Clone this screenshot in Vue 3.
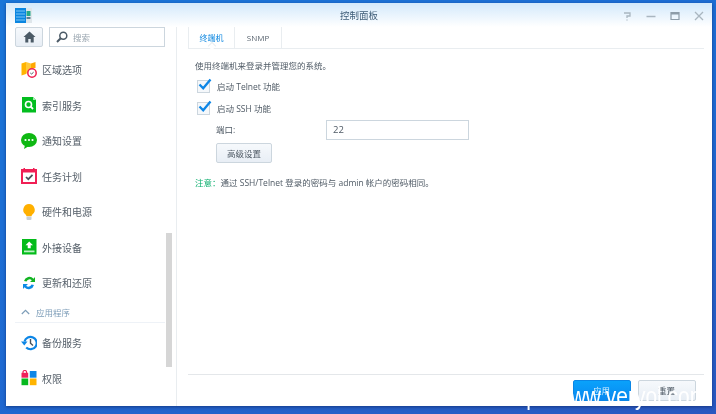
<script setup>
const topItems = [
  { key: 'region', label: '区域选项' },
  { key: 'index', label: '索引服务' },
  { key: 'notify', label: '通知设置' },
  { key: 'task', label: '任务计划' },
  { key: 'power', label: '硬件和电源' },
  { key: 'external', label: '外接设备' },
  { key: 'update', label: '更新和还原' }
]
const appItems = [
  { key: 'backup', label: '备份服务' },
  { key: 'perm', label: '权限' }
]
</script>

<template>
  <div class="desktop">
    <div class="window">
      <header class="titlebar">
        <svg class="logo" width="17" height="15" viewBox="0 0 17 15">
          <rect width="11" height="15" fill="#0b86e0" />
          <rect x="11" width="6" height="15" fill="#dfe6ea" />
          <path d="M1 3h9M1 6h9M1 9h9M1 12h9" stroke="#7cc4f5" stroke-width="1" />
          <rect x="11.5" y="3" width="4" height="5" fill="#25a88a" />
          <rect x="11.5" y="9" width="4" height="2" fill="#5d7f95" />
        </svg>
        <span class="title">控制面板</span>
        <div class="controls">
          <svg width="10" height="10" viewBox="0 0 10 10"><path d="M2 2h6v3H5v2M5 8.5v1" fill="none" stroke="#a9b6c0" stroke-width="1.3" /></svg>
          <svg width="10" height="10" viewBox="0 0 10 10"><path d="M0.500 5.500h9" stroke="#a9b6c0" stroke-width="1.500" /></svg>
          <svg width="10" height="10" viewBox="0 0 10 10"><path d="M1 1.500h8v7H1z" fill="none" stroke="#8d9ca8" stroke-width="1.200" /><path d="M1 2.500h8" stroke="#8d9ca8" stroke-width="2" /></svg>
          <svg width="10" height="10" viewBox="0 0 10 10"><path d="M1 1l8 8M9 1l-8 8" stroke="#a9b6c0" stroke-width="1.300" /></svg>
        </div>
      </header>

      <div class="body">
        <aside class="sidebar">
          <div class="toolbar">
            <button class="home">
              <svg width="13" height="12" viewBox="0 0 13 12">
                <path d="M6.500 0.500L0.500 6h1.800v5.500h3V8h2.400v3.500h3V6h1.800z" fill="#4b5a66" />
              </svg>
            </button>
            <div class="search">
              <svg width="12" height="12" viewBox="0 0 12 12">
                <circle cx="7.300" cy="4.700" r="3.500" fill="none" stroke="#4b5a66" stroke-width="1.500" />
                <path d="M4.700 7.300L1 11" stroke="#4b5a66" stroke-width="2" />
              </svg>
              <span>搜索</span>
            </div>
          </div>

          <nav class="nav">
            <div v-for="item in topItems" :key="item.key" class="nav-item">
              <svg class="nav-icon" width="16" height="16" viewBox="0 0 16 16">
                <template v-if="item.key === 'region'">
                  <path d="M0.500 1.500L5 0v12L0.500 13.500z" fill="#ffb400" />
                  <path d="M5 0l5 1.500V8l-5 4z" fill="#ffc93c" />
                  <path d="M10 1.500L14.500 0v6h-4.500z" fill="#ffa800" />
                  <circle cx="11" cy="11" r="4.200" fill="#fff" stroke="#ee2150" stroke-width="1.500" />
                  <path d="M9.300 11l1.300 1 2-1.800" fill="none" stroke="#4b5a66" stroke-width="1" />
                </template>
                <template v-else-if="item.key === 'index'">
                  <path d="M1 0h11l3 3v12.500H1z" fill="#03bd1f" />
                  <path d="M12 0v3h3z" fill="#a6eab0" />
                  <circle cx="7.500" cy="7.500" r="3" fill="none" stroke="#fff" stroke-width="1.600" />
                  <path d="M9.700 9.700l2.300 2.300" stroke="#fff" stroke-width="1.800" />
                </template>
                <template v-else-if="item.key === 'notify'">
                  <ellipse cx="8" cy="7" rx="8" ry="7" fill="#0fb813" />
                  <path d="M4 12l-1 4 5-3z" fill="#0fb813" />
                  <circle cx="4.500" cy="7" r="1.100" fill="#fff" />
                  <circle cx="8" cy="7" r="1.100" fill="#fff" />
                  <circle cx="11.500" cy="7" r="1.100" fill="#fff" />
                </template>
                <template v-else-if="item.key === 'task'">
                  <rect x="0" y="1" width="16" height="15" fill="#f01f55" />
                  <rect x="2" y="4.500" width="12" height="9.500" fill="#fff" />
                  <rect x="2.500" y="0" width="1.500" height="3" fill="#f01f55" />
                  <rect x="12" y="0" width="1.500" height="3" fill="#f01f55" />
                  <path d="M5 9l2.300 2.200L11.500 6.800" fill="none" stroke="#47525c" stroke-width="1.700" />
                </template>
                <template v-else-if="item.key === 'power'">
                  <path d="M8 0a5.800 5.800 0 0 0-3.600 10.300c.7.600 1 1.200 1 2h5.200c0-.8.300-1.400 1-2A5.800 5.800 0 0 0 8 0z" fill="#ffb000" />
                  <rect x="5.500" y="12.500" width="5" height="3.500" rx="1" fill="#c8d0d6" />
                </template>
                <template v-else-if="item.key === 'external'">
                  <rect x="1" y="0" width="14.500" height="15.500" fill="#04bb1a" />
                  <path d="M8.200 2.500L4.500 6.300h2.200v3h3v-3H12z" fill="#fff" />
                  <rect x="3" y="11.500" width="10.500" height="1.800" fill="#bdf0c4" />
                </template>
                <template v-else>
                  <path d="M3 6a5.500 5.500 0 0 1 9.500-2.300L14 2v5H9l1.800-1.800A3.300 3.300 0 0 0 5.500 6.500z" fill="#13b423" />
                  <path d="M13 10a5.500 5.500 0 0 1-9.500 2.300L2 14V9h5L5.200 10.800a3.300 3.300 0 0 0 5.300-1.300z" fill="#0c8ae6" />
                </template>
              </svg>
              <span>{{ item.label }}</span>
            </div>

            <div class="group">
              <svg width="9" height="6" viewBox="0 0 9 6"><path d="M0.800 5L4.500 1.300 8.200 5" fill="none" stroke="#7d9db8" stroke-width="1.200" /></svg>
              <span>应用程序</span>
            </div>

            <div v-for="item in appItems" :key="item.key" class="nav-item">
              <svg class="nav-icon" width="16" height="16" viewBox="0 0 16 16">
                <template v-if="item.key === 'backup'">
                  <path d="M3.500 6.500a6.200 6.200 0 1 1 1.700 6" fill="none" stroke="#0d86e6" stroke-width="2.200" />
                  <path d="M0 6.500h6.500L3.300 10.500z" fill="#0d86e6" />
                  <path d="M9.500 4v4.300l2.500 2.200" fill="none" stroke="#47525c" stroke-width="1.400" />
                </template>
                <template v-else>
                  <rect x="8.800" y="1" width="6.700" height="6.700" fill="#0d86e6" />
                  <rect x="0.500" y="8.500" width="6.700" height="6.700" fill="#06b91e" />
                  <rect x="8.800" y="8.500" width="6.700" height="6.700" fill="#ffb400" />
                  <rect x="0.500" y="2.800" width="6.700" height="4.900" fill="#f0205a" />
                  <path d="M2 3V2.300a1.800 1.800 0 0 1 3.600 0V3" fill="none" stroke="#f0205a" stroke-width="1.200" />
                </template>
              </svg>
              <span>{{ item.label }}</span>
            </div>
          </nav>
          <div class="scrollbar"></div>
        </aside>

        <main class="main">
          <div class="tabs">
            <div class="tab active">终端机</div>
            <div class="tab">SNMP</div>
          </div>

          <div class="content">
            <p class="desc">使用终端机来登录并管理您的系统。</p>
            <label class="check">
              <span class="box">
                <svg width="15" height="13" viewBox="0 0 15 13"><path d="M2.500 6.500l3.700 3.800L13.500 1.500" fill="none" stroke="#0d86e6" stroke-width="2.300" /></svg>
              </span>
              启动 Telnet 功能
            </label>
            <label class="check">
              <span class="box">
                <svg width="15" height="13" viewBox="0 0 15 13"><path d="M2.500 6.500l3.700 3.800L13.500 1.500" fill="none" stroke="#0d86e6" stroke-width="2.300" /></svg>
              </span>
              启动 SSH 功能
            </label>
            <div class="port-row">
              <span class="port-label">端口:</span>
              <div class="input">22</div>
            </div>
            <button class="btn advanced">高级设置</button>
            <p class="note"><span class="note-tag">注意：</span>通过 SSH/Telnet 登录的密码与 admin 帐户的密码相同。</p>
          </div>

          <footer class="footer">
            <button class="btn primary">应用</button>
            <button class="btn reset">重置</button>
          </footer>
        </main>
      </div>
    </div>
    <div class="watermark">http://www.veryol.com</div>
  </div>
</template>

<style>
html, body { margin: 0; padding: 0; }
</style>

<style scoped>
.desktop {
  position: relative;
  box-sizing: border-box;
  width: 716px;
  height: 414px;
  overflow: hidden;
  padding: 3px 4px 8px 6px;
  background: linear-gradient(160deg, #1a76d8 0%, #1f6ad2 55%, #2a58c0 100%);
  font-family: "Open Sans", "Noto Sans CJK SC", sans-serif;
  color: #4f5a65;
  filter: blur(0.35px);
}
.window {
  display: flex;
  flex-direction: column;
  height: 403px;
  background: #fff;
  box-shadow: 0 1px 3px rgba(10, 30, 90, 0.6);
}
.titlebar {
  position: relative;
  flex: none;
  display: flex;
  align-items: center;
  justify-content: center;
  height: 24px;
  background: linear-gradient(#d3e9fb, #ffffff);
}
.logo { position: absolute; left: 9px; top: 5px; }
.title { font-size: 9.500px; color: #3f5d78; }
.controls {
  position: absolute;
  right: 8px;
  top: 8px;
  display: flex;
  gap: 14px;
}
.body { flex: 1; display: flex; min-height: 0; }
.sidebar {
  position: relative;
  flex: none;
  box-sizing: border-box;
  width: 171px;
  padding: 0 0 0 9px;
  border-right: 1.500px solid #e9edf0;
}
.toolbar { display: flex; gap: 6px; height: 20px; }
.home {
  box-sizing: border-box;
  width: 28px;
  height: 20px;
  padding: 0;
  display: flex;
  align-items: center;
  justify-content: center;
  border: 1px solid #ccd6de;
  border-radius: 2px;
  background: linear-gradient(#f6f9fc, #e8eef5);
}
.search {
  box-sizing: border-box;
  width: 116px;
  height: 20px;
  display: flex;
  align-items: center;
  gap: 5px;
  padding-left: 6px;
  border: 1px solid #ccd6de;
  font-size: 8.500px;
  color: #9aa6b0;
}
.nav { margin: 5px 0 0 -3px; }
.nav-item {
  display: flex;
  align-items: center;
  gap: 5px;
  height: 35.500px;
  padding-left: 9px;
  font-size: 10px;
  color: #56606a;
}
.nav-icon { flex: none; }
.group {
  display: flex;
  align-items: center;
  gap: 6px;
  box-sizing: border-box;
  width: 150px;
  height: 22px;
  margin: 0 0 2.500px 3px;
  padding: 2px 0 0 6px;
  border-bottom: 1px solid #eef2f7;
  font-size: 8.500px;
  color: #7d9db8;
}
.scrollbar {
  position: absolute;
  left: 160px;
  top: 206px;
  width: 6px;
  height: 134px;
  background: #d6d6d6;
}
.main {
  flex: 1;
  display: flex;
  flex-direction: column;
  min-width: 0;
  padding: 0 8.500px 0 11px;
}
.tabs {
  flex: none;
  display: flex;
  height: 21px;
  border-bottom: 1px solid #e9edf0;
}
.tab {
  position: relative;
  width: 47px;
  display: flex;
  align-items: center;
  justify-content: center;
  box-sizing: border-box;
  border-right: 1px solid #e9edf0;
  font-size: 8px;
  color: #5a6570;
}
.tab.active { color: #0b86e0; border-left: 1px solid #e9edf0; }
.tab.active::after {
  content: "";
  position: absolute;
  left: 20px;
  bottom: -1px;
  width: 5px;
  height: 5px;
  background: #fff;
  border-left: 1px solid #e9edf0;
  border-top: 1px solid #e9edf0;
  transform: rotate(45deg);
}
.content {
  flex: 1;
  padding: 11px 0 0 7px;
  font-size: 8.500px;
  line-height: 12px;
}
.desc { margin: 0 0 8px; }
.check {
  display: flex;
  align-items: center;
  gap: 7px;
  height: 13px;
  margin: 0 0 9px 2px;
}
.box {
  position: relative;
  flex: none;
  box-sizing: border-box;
  width: 13px;
  height: 13px;
  border: 1px solid #ccd6de;
  background: #f5f8fb;
}
.box svg { position: absolute; left: -1px; top: -3px; }
.port-row {
  display: flex;
  align-items: center;
  height: 20px;
  margin-top: -4px;
}
.port-label { width: 110px; padding-left: 21px; box-sizing: content-box; }
.input {
  box-sizing: border-box;
  width: 143px;
  height: 20px;
  padding-left: 6px;
  line-height: 18px;
  border: 1px solid #ccd6de;
  color: #4f5a65;
  font-size: 9.500px;
}
.btn {
  box-sizing: border-box;
  height: 20px;
  padding: 0;
  border: 1px solid #ccd6de;
  border-radius: 2px;
  background: linear-gradient(#f6f9fc, #e8eef5);
  font-family: inherit;
  font-size: 8.500px;
  color: #4f5a65;
}
.advanced { display: block; width: 56px; margin: 3px 0 0 21px; }
.note { margin: 14px 0 0; }
.note-tag { color: #10b070; margin-right: 0; }
.footer {
  flex: none;
  display: flex;
  justify-content: flex-end;
  gap: 7px;
  height: 32px;
  padding: 5px 8px 0 0;
  box-sizing: border-box;
  border-top: 1.500px solid #e4e7ea;
}
.footer .btn { width: 58px; height: 21px; padding-bottom: 2px; }
.primary {
  border-color: #0a86e6;
  background: linear-gradient(#0aa2fb, #0888f0);
  color: #d9f0ff;
}
.footer .primary { border-color: #0a86e6; background: linear-gradient(#0aa2fb, #0888f0); }
.watermark {
  position: absolute;
  left: 503px;
  top: 380px;
  font-family: "Liberation Sans", sans-serif;
  font-size: 25px;
  line-height: 32px;
  color: #fff;
  white-space: nowrap;
  transform: scaleX(0.84);
  transform-origin: left top;
}
</style>
